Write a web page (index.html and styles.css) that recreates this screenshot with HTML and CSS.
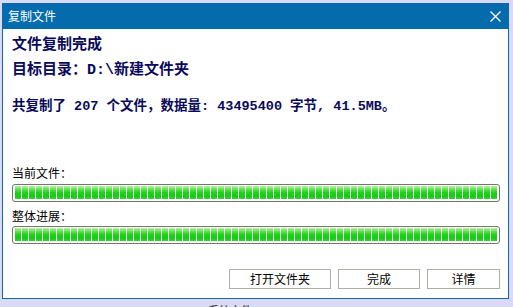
FILE: index.html
```html
<!DOCTYPE html>
<html lang="zh-CN">
<head>
    <meta charset="UTF-8">
    <meta name="viewport" content="width=device-width, initial-scale=1.0">
    <title>复制文件</title>
    <link rel="stylesheet" href="styles.css">
</head>
<body>

    <div class="window">
        <div class="titlebar">
            <span class="title">复制文件</span>
            <svg class="close" width="11" height="11" viewBox="0 0 11 11">
                <path d="M0.5 0.5 L10.5 10.5 M10.5 0.5 L0.5 10.5" stroke="#fff" stroke-width="1.3" fill="none"/>
            </svg>
        </div>

        <div class="content">
            <div class="heading">文件复制完成</div>
            <div class="heading">目标目录：D:\新建文件夹</div>
            <div class="stats">共复制了 207 个文件，数据量: 43495400 字节, 41.5MB。</div>

            <div class="label first">当前文件：</div>
            <div class="bar"><div class="fill"></div></div>
            <div class="label">整体进展：</div>
            <div class="bar"><div class="fill"></div></div>

            <!-- dialog buttons -->
            <div class="buttons">
                <button class="btn wide">打开文件夹</button>
                <button class="btn mid">完成</button>
                <button class="btn narrow">详情</button>
            </div>
        </div>
    </div>

    <div class="behind">
        <span>64</span>
        <span>356 KB</span>
        <span>系统文件</span>
        <span>VXI</span>
        <span>64</span>
        <span>2022-02</span>
    </div>

</body>
</html>
```

FILE: styles.css
```css
body {
    margin: 0;
    width: 513px;
    height: 307px;
    overflow: hidden;
    background: #dadaf6;
    font-family: "Noto Sans CJK SC", sans-serif;
    color: #000;
}
.window {
    margin: 3px 0 0 2px;
    width: 507px;
    height: 296px;
    box-sizing: border-box;
    background: #fff;
    border: 1px solid #0d6aa8;
    border-top: none;
    display: flex;
    flex-direction: column;
}
.titlebar {
    height: 26px;
    margin: 0 -1px;
    background: #046cad;
    display: flex;
    align-items: center;
    justify-content: space-between;
    padding: 0 8px 0 6px;
    color: #fff;
    font-size: 12px;
}
.title {
    line-height: 14px;
    margin-top: -1px;
}
.close {
    display: block;
    margin-top: 1px;
}
.content {
    padding: 4px 8px 0 9px;
    display: flex;
    flex-direction: column;
}
.heading {
    font-family: "Liberation Mono", "Noto Sans CJK SC", monospace;
    font-weight: bold;
    font-size: 15px;
    line-height: 25px;
    height: 25px;
    color: #0a0a5a;
}
.stats {
    margin-top: 14px;
    font-family: "Liberation Mono", "Noto Sans CJK SC", monospace;
    font-weight: bold;
    font-size: 13.5px;
    line-height: 20px;
    height: 20px;
    color: #0a0a5a;
    white-space: nowrap;
}
.label {
    font-size: 12px;
    line-height: 16px;
    height: 16px;
    margin-top: 6px;
    margin-bottom: 2px;
}
.label.first {
    margin-top: 48px;
    margin-bottom: 3px;
}
.bar {
    height: 18px;
    box-sizing: border-box;
    border: 1px solid #76766a;
    border-radius: 3px;
    padding: 1px 2px 2px 2px;
    background: #fff;
}
.fill {
    height: 100%;
    background:
        repeating-linear-gradient(to right, transparent 0 6px, #fff 6px 7px),
        linear-gradient(to bottom, #b4f0a6 0%, #62e452 25%, #1fd41a 50%, #14cc12 75%, #3ccf38 100%);
}
.buttons {
    margin-top: 25px;
    display: flex;
    justify-content: flex-end;
    gap: 7px;
}
.btn {
    height: 20px;
    box-sizing: border-box;
    border: 1px solid #aeaea6;
    background: #fff;
    font-family: "Noto Sans CJK SC", sans-serif;
    font-size: 12px;
    line-height: 16px;
    padding: 0;
    color: #000;
}
.btn.wide {
    width: 102px;
}
.btn.mid {
    width: 82px;
}
.btn.narrow {
    width: 73px;
}
.behind {
    display: grid;
    grid-template-columns: 36px 116px 56px 95px 112px 50px 60px;
    padding-left: 0;
    margin-top: 4px;
    font-size: 11px;
    line-height: 14px;
    color: #222;
}
.behind span:first-child {
    grid-column: 2;
}
```
